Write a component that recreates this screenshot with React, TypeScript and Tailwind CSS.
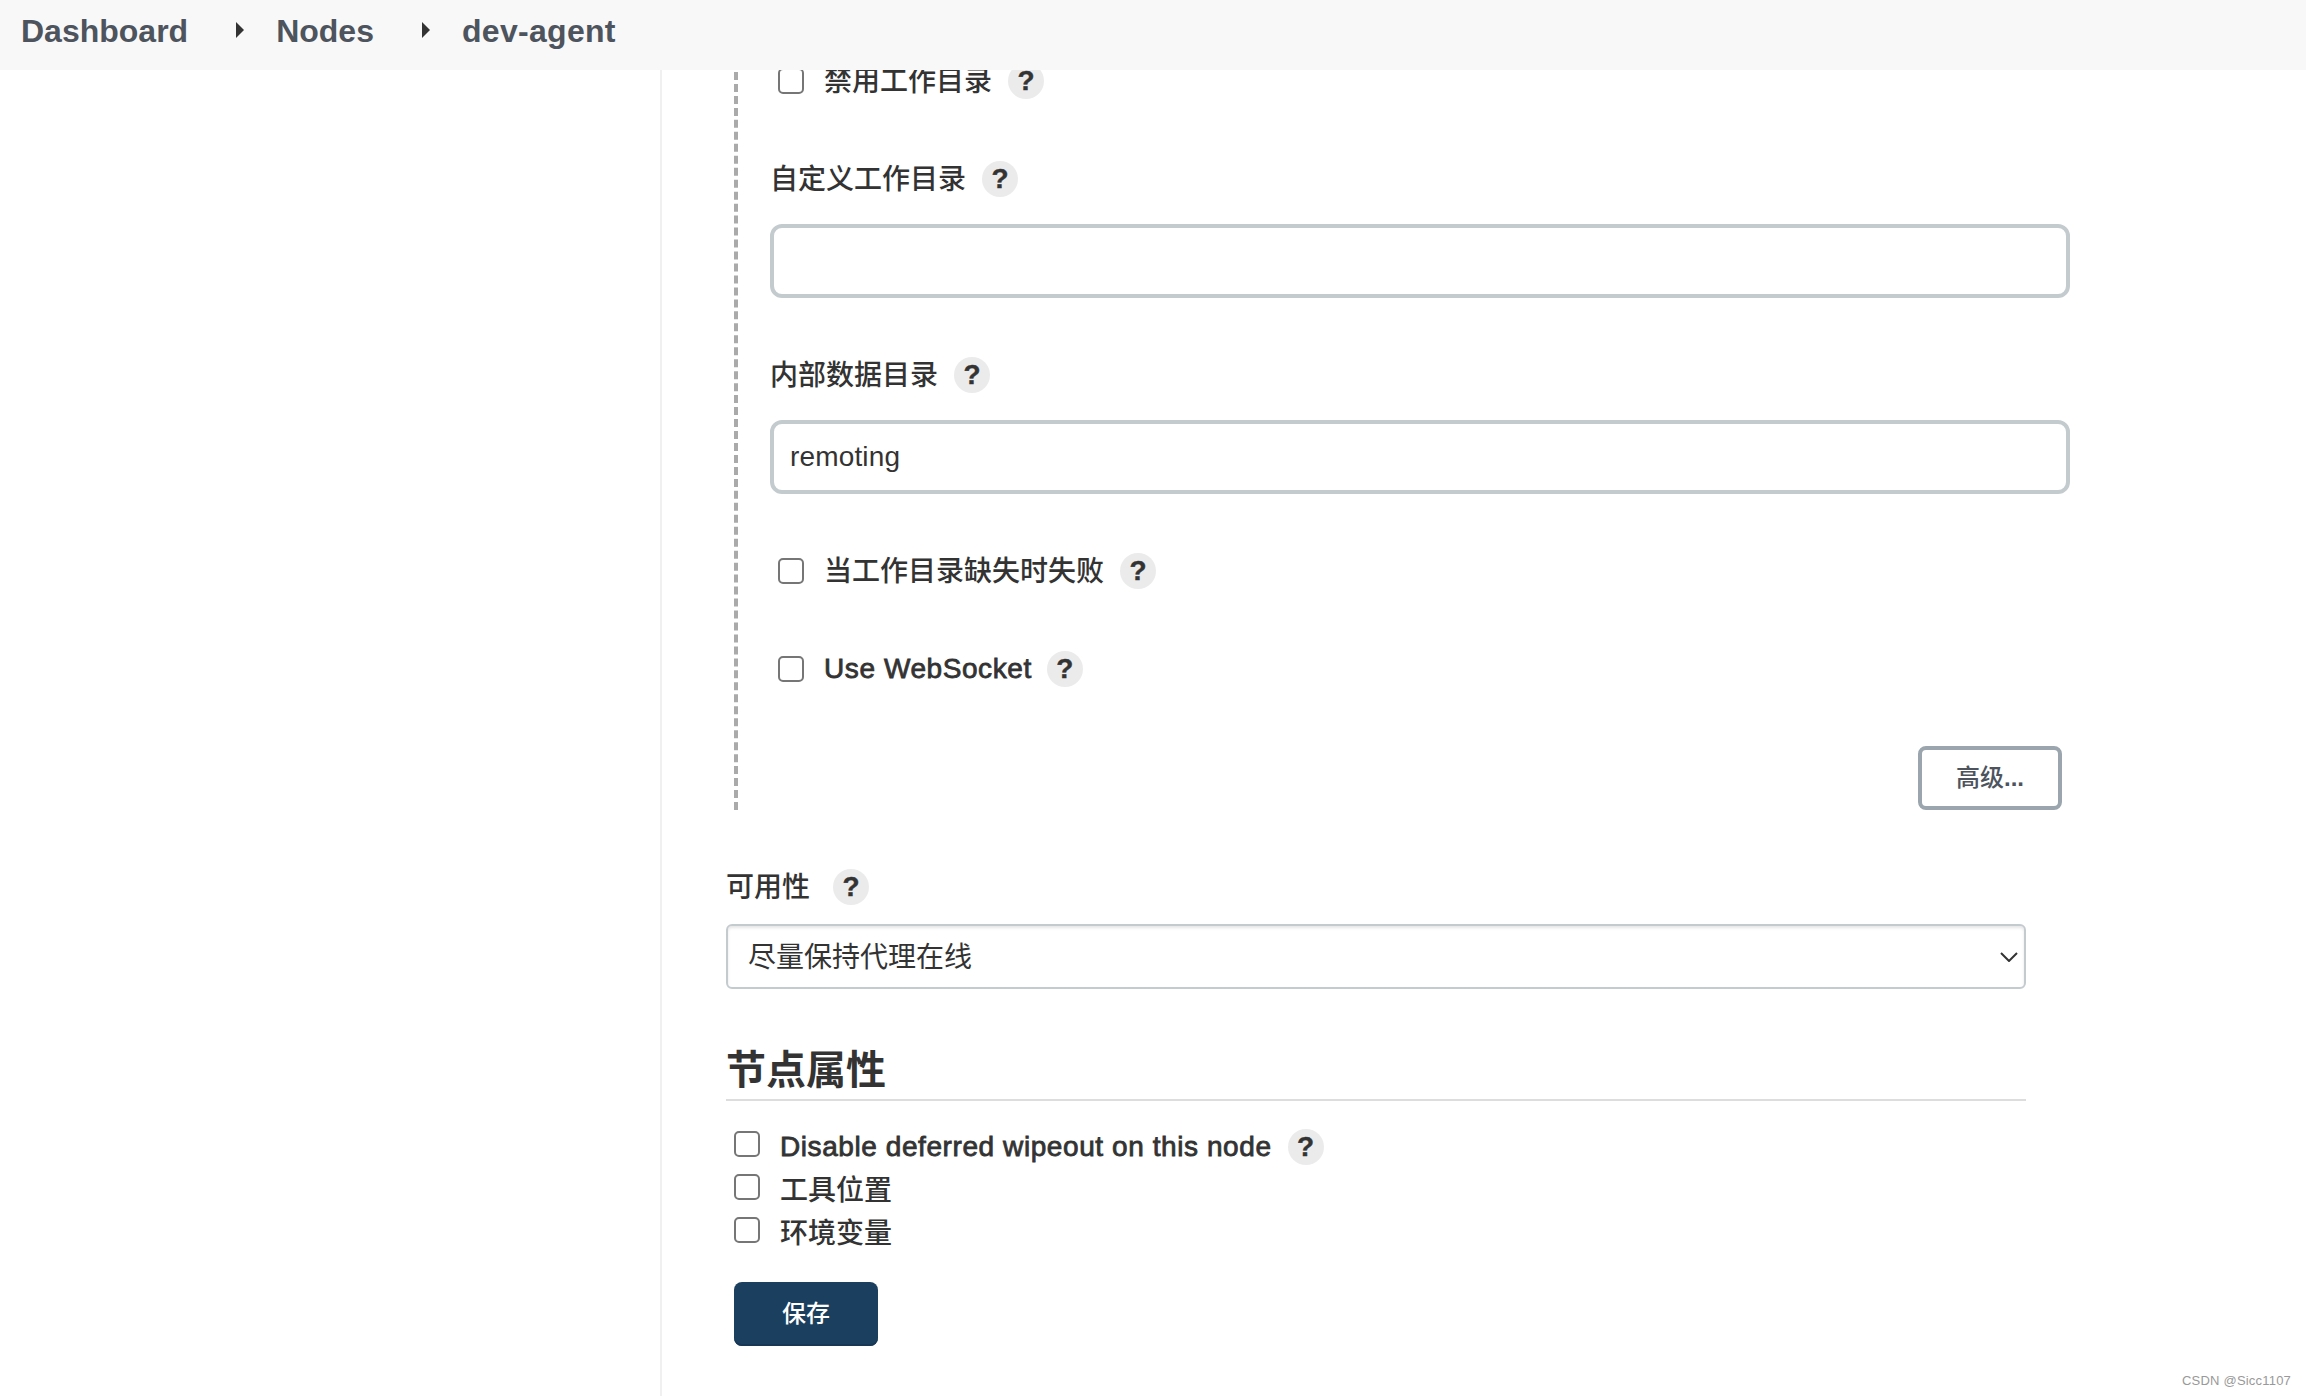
import clsx from 'clsx';
import type { ReactNode } from 'react';

const NODE_PROPERTIES = [
  { label: 'Disable deferred wipeout on this node', hasHelp: true },
  { label: '工具位置', hasHelp: false },
  { label: '环境变量', hasHelp: false },
];

const CRUMBS = ['Dashboard', 'Nodes', 'dev-agent'];

const CrumbArrow = () => (
  <svg
    className="mr-8 ml-12 h-4 w-2 -translate-y-px"
    viewBox="0 0 8 16"
    fill="#333"
  >
    <path d="M0 0 8 8 0 16Z" />
  </svg>
);

const HelpButton = ({ className }: { className?: string }) => (
  <button
    type="button"
    className={clsx(
      'flex size-9 shrink-0 items-center justify-center rounded-full bg-[#ebebeb] text-[28px] leading-9 font-bold [-webkit-text-stroke:0.4px_#333]',
      className,
    )}
  >
    ?
  </button>
);

const Checkbox = () => (
  <input
    type="checkbox"
    className="size-[26px] shrink-0 appearance-none rounded-[5px] border-2 border-[#767676] bg-white"
  />
);

// Latin labels have no medium face, so they get a thin stroke instead
const Label = ({ children, latin }: { children: ReactNode; latin?: boolean }) => (
  <span
    className={clsx(
      'block text-[28px] leading-9 whitespace-nowrap',
      latin
        ? 'tracking-[0.58px] [-webkit-text-stroke:0.8px_#333]'
        : 'translate-y-px font-medium',
    )}
  >
    {children}
  </span>
);

interface CheckRowProps {
  label: string;
  latin?: boolean;
  className?: string;
}

const CheckRow = ({ label, latin, className }: CheckRowProps) => (
  <div className={clsx('flex h-9 items-center pl-2', className)}>
    <Checkbox />
    <div className="ml-5">
      <Label latin={latin}>{label}</Label>
    </div>
    <HelpButton className={latin ? 'ml-[15px]' : 'ml-4'} />
  </div>
);

interface TextFieldProps {
  label: string;
  value?: string;
  className?: string;
}

const TextField = ({ label, value = '', className }: TextFieldProps) => (
  <div className={className}>
    <div className="flex h-9 items-center">
      <Label>{label}</Label>
      <HelpButton className="ml-4" />
    </div>
    <input
      type="text"
      defaultValue={value}
      className="mt-[27px] block h-[74px] w-full rounded-xl border-4 border-[#c4cbcf] bg-white px-4 text-[28px] tracking-[0.15px]"
    />
  </div>
);

export default function App() {
  return (
    <div className="relative h-[1396px] w-[2306px] overflow-hidden bg-white font-['Liberation_Sans','Noto_Sans_CJK_SC',sans-serif] text-[#333]">
      <header className="flex h-[70px] items-center bg-[#f8f8f8] pb-[9px] pl-[21px] text-[32px] font-bold text-[#4d545d]">
        {CRUMBS.map((crumb, i) => (
          <div
            key={crumb}
            className="flex items-center last:tracking-[0.3px]"
          >
            {i > 0 && <CrumbArrow />}
            <span>{crumb}</span>
          </div>
        ))}
      </header>

      <div className="flex h-[1326px] overflow-hidden">
        <aside className="w-[660px] shrink-0" />
        <main className="grow border-l-2 border-[#f0f0f0] pt-0.5 pl-16">
          <section className="ml-2 flow-root h-[738px] w-[1336px] border-l-4 border-dashed border-[#aaa] pl-8">
            <CheckRow label="禁用工作目录" className="-mt-[9px]" />
            <TextField label="自定义工作目录" className="mt-[62px]" />
            <TextField
              label="内部数据目录"
              value="remoting"
              className="mt-[59px]"
            />
            <CheckRow label="当工作目录缺失时失败" className="mt-[59px]" />
            <CheckRow label="Use WebSocket" latin className="mt-[62px]" />
            <div className="mt-[59px] flex justify-end pr-2">
              <button
                type="button"
                className="h-16 w-36 rounded-lg border-4 border-[#9ba5ad] bg-white text-2xl font-medium text-[#4d545d]"
              >
                高级<span className="font-bold">...</span>
              </button>
            </div>
          </section>

          <section className="w-[1300px]">
            <div className="mt-[59px] flex h-9 items-center">
              <Label>可用性</Label>
              <HelpButton className="ml-[23px]" />
            </div>
            <div className="mt-[19px] flex h-[65px] items-center justify-between rounded-md border-2 border-[#c4cbcf] pr-[6px] pl-5 text-[28px] shadow-[inset_0_2px_3px_rgba(0,0,0,0.1)]">
              <span className="pt-0.5">尽量保持代理在线</span>
              <svg
                className="h-[10px] w-[18px]"
                viewBox="0 0 18 10"
                fill="none"
                stroke="#333"
                strokeWidth="2"
              >
                <path d="m1 1 8 8 8-8" />
              </svg>
            </div>
            <h2 className="mt-[40px] flex h-[72px] items-center border-b-2 border-[#ddd] pt-3 text-[40px] leading-none font-bold">
              节点属性
            </h2>
            <div className="mt-7 pl-2">
              {NODE_PROPERTIES.map(({ label, hasHelp }) => (
                <div key={label} className="flex h-[43px] items-start">
                  <div className="mt-0.5 flex">
                    <Checkbox />
                  </div>
                  <div className="ml-5">
                    <Label latin={hasHelp}>{label}</Label>
                  </div>
                  {hasHelp && <HelpButton className="ml-4" />}
                </div>
              ))}
            </div>
            <button
              type="button"
              className="mt-6 ml-2 h-16 w-36 rounded-lg bg-[#1b3f5e] text-2xl font-medium text-white shadow-[inset_0_-2px_0_#173754]"
            >
              保存
            </button>
          </section>
        </main>
      </div>

      <div className="absolute right-[15px] bottom-[7px] text-[13px] leading-4 tracking-[0.2px] text-[#999]">
        CSDN @Sicc1107
      </div>
    </div>
  );
}
